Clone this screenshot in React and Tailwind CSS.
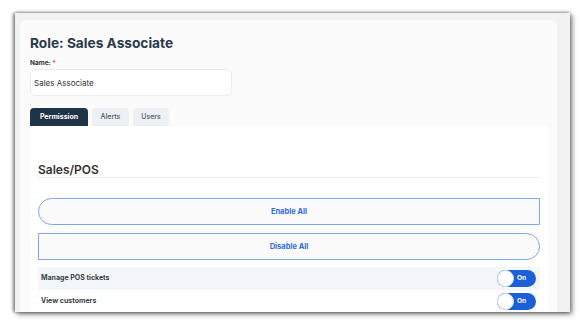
import React, { useState } from 'react'

export default function App() {
  const [tab, setTab] = useState('permission');
  const [perms, setPerms] = useState({ tickets: true, customers: true });

  const rows = [
    { id: 'tickets', label: 'Manage POS tickets', bg: 'bg-[#f3f6fa]', h: 'h-[23px]' },
    { id: 'customers', label: 'View customers', bg: 'bg-white', h: 'h-[22px]' },
  ];

  return (
    <div className="w-[582px] h-[326px] bg-white pt-[13px] pl-[15px] font-['Inter',sans-serif]">
      {/* marco gris con sombra */}
      <div className="w-[555px] h-[299px] bg-[#f2f2f2] overflow-hidden pt-[7px] pl-[5px] shadow-[2px_2px_5px_rgba(0,0,0,0.55),-2px_0_3px_rgba(0,0,0,0.4),0_-1px_3px_rgba(0,0,0,0.15)]">
        <div className="w-[537px] h-[320px] bg-[#fbfbfb] rounded-md pt-[13px] px-[10px]">
          <h1 className="text-[13.7px] leading-[20px] font-bold text-[#2a3a4b]">Role: Sales Associate</h1>

          <div className="mt-[6px] text-[6.5px] leading-[8px] font-bold text-[#333]">
            Name: <span className="text-[#e53e3e]">*</span>
          </div>
          <div className="mt-[2px] w-[202px] h-[27px] bg-white border border-[#ececec] rounded-md flex items-center px-[3px] text-[8px] text-[#333]">
            Sales Associate
          </div>

          {/* TABS */}
          <div className="mt-[12px] flex gap-[4px] h-[18px]">
            {[
              { id: 'permission', label: 'Permission', w: 'w-[58px]' },
              { id: 'alerts', label: 'Alerts', w: 'w-[37px]' },
              { id: 'users', label: 'Users', w: 'w-[36px]' },
            ].map((t) => (
              <button
                key={t.id}
                onClick={() => setTab(t.id)}
                className={`${t.w} h-[18px] rounded-t-[4px] text-[7px] flex items-center justify-center ${
                  tab === t.id ? 'bg-[#1f3447] text-white font-bold' : 'bg-[#edf1f6] text-[#4a5563] font-medium'
                }`}
              >
                {t.label}
              </button>
            ))}
          </div>

          {/* PANEL */}
          <div className="bg-white w-[518px] h-[200px] pt-[36px] px-[8px]">
            <h2 className="text-[12px] leading-[15px] font-semibold text-[#333] border-b border-[#ededed]">Sales/POS</h2>

            <button className="mt-[20px] w-full h-[27px] border border-[#7ca8ef] rounded-l-full bg-[#fbfbfc] text-[7.5px] font-bold text-[#2f6ae0] flex items-center justify-center">
              Enable All
            </button>
            <button className="mt-[8px] w-full h-[27px] border border-[#7ca8ef] rounded-r-full bg-[#fbfbfc] text-[7.5px] font-bold text-[#2f6ae0] flex items-center justify-center">
              Disable All
            </button>

            <div className="mt-[7px]">
              {rows.map((r) => (
                <div key={r.id} className={`${r.bg} ${r.h} flex items-center justify-between pl-[3px] pr-[4px]`}>
                  <span className="text-[7px] font-bold text-[#3a3f46]">{r.label}</span>
                  <button
                    onClick={() => setPerms({ ...perms, [r.id]: !perms[r.id] })}
                    className="w-[39px] h-[17px] rounded-full bg-[#1c5fd9] relative flex items-center leading-none"
                  >
                    <span className="absolute left-0 top-0 w-[17px] h-[17px] rounded-full bg-white border border-[#e2e2e2]"></span>
                    <span className="ml-[20px] text-[6.5px] leading-[17px] font-bold text-white">On</span>
                  </button>
                </div>
              ))}
            </div>
          </div>
        </div>
      </div>
    </div>
  )
}
